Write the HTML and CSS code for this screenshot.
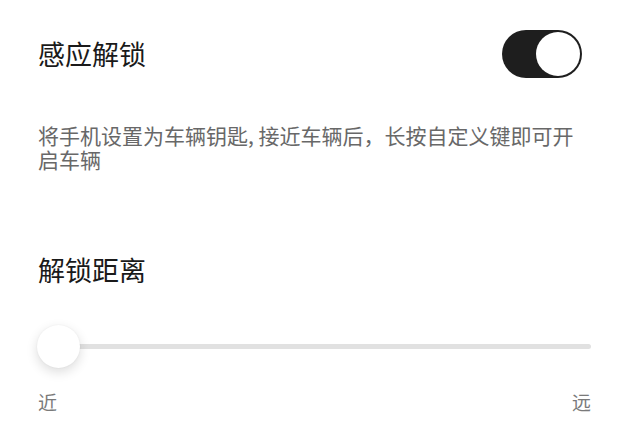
FILE: index.html
```html
<!DOCTYPE html>
<html lang="zh-CN">
<head>
<meta charset="utf-8">
<title>感应解锁</title>
<link rel="stylesheet" href="styles.css">
</head>
<body>
  <main class="settings">
    <section class="setting-row">
      <h2 class="setting-title">感应解锁</h2>
      <div class="switch is-on" role="switch" aria-checked="true">
        <span class="switch-knob"></span>
      </div>
    </section>

    <p class="setting-desc">将手机设置为车辆钥匙, 接近车辆后，长按自定义键即可开启车辆</p>

    <h2 class="setting-title distance-title">解锁距离</h2>

    <div class="slider">
      <div class="slider-track"></div>
      <span class="slider-thumb"></span>
    </div>

    <div class="slider-labels">
      <span>近</span>
      <span>远</span>
    </div>
  </main>
</body>
</html>
```

FILE: styles.css
```css
* {
  box-sizing: border-box;
}

html, body {
  margin: 0;
  padding: 0;
  background: #ffffff;
}

body {
  width: 630px;
  height: 432px;
  overflow: hidden;
  font-family: "Noto Sans CJK SC", "Noto Sans", sans-serif;
}

.settings {
  display: flex;
  flex-direction: column;
  padding: 30px 39px 0 38px;
}

.setting-row {
  display: flex;
  align-items: center;
  justify-content: space-between;
  height: 48px;
  padding-right: 9px;
}

.setting-title {
  margin: 0;
  font-size: 27px;
  font-weight: 400;
  line-height: 36px;
  color: #1a1a1a;
}

/* toggle switch, on state */
.switch {
  width: 80px;
  height: 48px;
  border-radius: 24px;
  background: #1e1e1e;
  padding: 2px;
  display: flex;
  justify-content: flex-end;
}

.switch-knob {
  width: 44px;
  height: 44px;
  border-radius: 50%;
  background: #ffffff;
}

.setting-desc {
  margin: 45px 0 0;
  font-size: 21px;
  line-height: 24px;
  color: #686868;
}

.distance-title {
  margin-top: 81px;
}

.slider {
  position: relative;
  height: 43px;
  margin-top: 37px;
  display: flex;
  align-items: center;
  padding-left: 21px;
}

.slider-track {
  flex: 1;
  height: 5px;
  border-radius: 3px;
  background: #e1e1e1;
}

.slider-thumb {
  position: absolute;
  left: -1px;
  top: 0;
  width: 43px;
  height: 43px;
  border-radius: 50%;
  background: #ffffff;
  box-shadow: 0 4px 12px rgba(0, 0, 0, 0.14), 0 0 2px rgba(0, 0, 0, 0.06);
}

.slider-labels {
  display: flex;
  justify-content: space-between;
  margin-top: 22px;
  font-size: 19px;
  line-height: 24px;
  color: #7a7a7a;
}
```
